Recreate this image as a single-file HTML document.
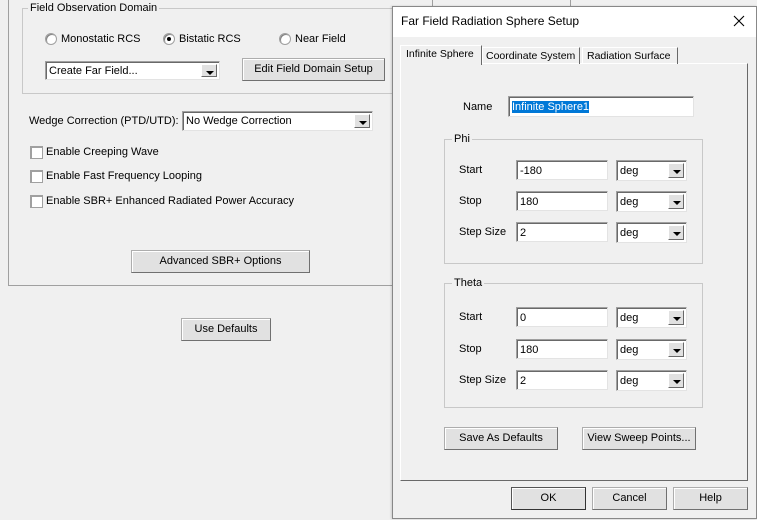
<!DOCTYPE html>
<html><head><meta charset="utf-8"><style>
*{box-sizing:border-box;margin:0;padding:0}
body{width:757px;height:520px;background:#f0f0f0;font-family:"Liberation Sans",Tahoma,sans-serif;font-size:11px;color:#000;position:relative;overflow:hidden}
.a{position:absolute}
.t{position:absolute;white-space:nowrap;line-height:13px}
.grp{position:absolute;border:1px solid #c8c8c8}
.lbl{position:absolute;background:#f0f0f0;padding:0 2px;line-height:13px;top:-7px;left:5px;white-space:nowrap}
.btn{position:absolute;background:#e1e1e1;border:1px solid #adadad;border-right-color:#707070;border-bottom-color:#707070;box-shadow:inset 1px 1px 0 #fff;text-align:center;white-space:nowrap}
.tb{position:absolute;background:#fff;border:1px solid #a0a0a0;border-right-color:#e3e3e3;border-bottom-color:#e3e3e3;box-shadow:inset 1px 1px 0 #696969;padding:3px 0 0 3px;line-height:14px;white-space:nowrap}
.cb{position:absolute;background:#fff;border:1px solid #a0a0a0;border-right-color:#e3e3e3;border-bottom-color:#e3e3e3;box-shadow:inset 1px 1px 0 #696969;padding:4px 0 0 3px;line-height:13px;white-space:nowrap}
.cb .ar{position:absolute;right:2px;top:2px;bottom:2px;width:16px;background:#e1e1e1;border:1px solid #fff;border-right-color:#696969;border-bottom-color:#696969}
.cb .ar:after{content:"";position:absolute;left:4px;top:6px;border-left:4px solid transparent;border-right:4px solid transparent;border-top:4px solid #000}
.rad{position:absolute;width:12px;height:12px;border-radius:50%;background:#fff;border:1px solid #a0a0a0;box-shadow:inset 1px 1px 0 #808080}
.chk{position:absolute;width:13px;height:13px;background:#fff;border:1px solid #a0a0a0;box-shadow:inset 1px 1px 0 #a0a0a0}
</style></head><body>
<div class="a" style="left:8px;top:0;width:1px;height:286px;background:#a0a0a0"></div>
<div class="a" style="left:8px;top:285px;width:384px;height:1px;background:#a0a0a0"></div>
<div class="grp" style="left:22px;top:8px;width:380px;height:86px"><span class="lbl">Field Observation Domain</span></div>
<div class="rad" style="left:45px;top:33px"></div><div class="t" style="left:61px;top:33px">Monostatic RCS</div>
<div class="rad" style="left:163px;top:33px"><div class="a" style="left:3px;top:3px;width:4px;height:4px;border-radius:50%;background:#000"></div></div><div class="t" style="left:179px;top:33px">Bistatic RCS</div>
<div class="rad" style="left:279px;top:33px"></div><div class="t" style="left:295px;top:33px">Near Field</div>
<div class="cb" style="left:45px;top:61px;width:175px;height:19px;padding-top:3px">Create Far Field...<span class="ar"></span></div>
<div class="btn" style="left:242px;top:58px;width:143px;height:23px;line-height:21px">Edit Field Domain Setup</div>
<div class="t" style="left:29px;top:115px">Wedge Correction (PTD/UTD):</div>
<div class="cb" style="left:182px;top:111px;width:191px;height:20px;padding-top:3px">No Wedge Correction<span class="ar"></span></div>
<div class="chk" style="left:30px;top:146px"></div><div class="t" style="left:46px;top:146px">Enable Creeping Wave</div>
<div class="chk" style="left:30px;top:170px"></div><div class="t" style="left:46px;top:170px">Enable Fast Frequency Looping</div>
<div class="chk" style="left:30px;top:195px"></div><div class="t" style="left:46px;top:195px">Enable SBR+ Enhanced Radiated Power Accuracy</div>
<div class="btn" style="left:131px;top:250px;width:179px;height:23px;line-height:21px">Advanced SBR+ Options</div>
<div class="btn" style="left:181px;top:318px;width:90px;height:23px;line-height:21px">Use Defaults</div>
<div class="a" style="left:432px;top:0;width:1px;height:6px;background:#a0a0a0"></div>
<div class="a" style="left:570px;top:0;width:1px;height:6px;background:#a0a0a0"></div>
<div class="a" style="left:392px;top:6px;width:365px;height:513px;background:#f0f0f0;border:1px solid #888;box-shadow:-1px 0 2px rgba(0,0,0,.15)"></div>
<div class="a" style="left:393px;top:7px;width:363px;height:30px;background:#fff"></div>
<div class="t" style="left:401px;top:15px;font-size:12px">Far Field Radiation Sphere Setup</div>
<svg class="a" style="left:733px;top:15px" width="12" height="12"><path d="M1 1L11 11M11 1L1 11" stroke="#000" stroke-width="1.1"/></svg>
<div class="a" style="left:400px;top:63px;width:348px;height:418px;border:1px solid #fff;border-right-color:#696969;border-bottom-color:#696969"></div>
<div class="a" style="left:400px;top:45px;width:82px;height:20px;background:#f0f0f0;border:1px solid #fff;border-bottom:none;border-right-color:#696969"></div>
<div class="t" style="left:406px;top:48px;font-size:10.5px">Infinite Sphere</div>
<div class="a" style="left:482px;top:47px;width:98px;height:17px;border:1px solid #fff;border-bottom:none;border-right-color:#696969"></div>
<div class="t" style="left:486px;top:50px;font-size:10.5px">Coordinate System</div>
<div class="a" style="left:582px;top:47px;width:96px;height:17px;border:1px solid #fff;border-bottom:none;border-right-color:#696969"></div>
<div class="t" style="left:587px;top:50px;font-size:10.5px">Radiation Surface</div>
<div class="t" style="left:463px;top:101px">Name</div>
<div class="tb" style="left:508px;top:96px;width:186px;height:21px"><span style="background:#0078d7;color:#fff">Infinite Sphere1</span></div>
<div class="grp" style="left:444px;top:139px;width:259px;height:125px"><span class="lbl" style="left:7px">Phi</span></div>
<div class="grp" style="left:444px;top:283px;width:259px;height:125px"><span class="lbl" style="left:7px">Theta</span></div>
<div class="t" style="left:459px;top:164px">Start</div><div class="tb" style="left:516px;top:160px;width:92px;height:20px">-180</div><div class="cb" style="left:616px;top:160px;width:71px;height:21px">deg<span class="ar"></span></div>
<div class="t" style="left:459px;top:195px">Stop</div><div class="tb" style="left:516px;top:191px;width:92px;height:20px">180</div><div class="cb" style="left:616px;top:191px;width:71px;height:21px">deg<span class="ar"></span></div>
<div class="t" style="left:459px;top:226px">Step Size</div><div class="tb" style="left:516px;top:222px;width:92px;height:20px">2</div><div class="cb" style="left:616px;top:222px;width:71px;height:21px">deg<span class="ar"></span></div>
<div class="t" style="left:459px;top:311px">Start</div><div class="tb" style="left:516px;top:307px;width:92px;height:20px">0</div><div class="cb" style="left:616px;top:307px;width:71px;height:21px">deg<span class="ar"></span></div>
<div class="t" style="left:459px;top:343px">Stop</div><div class="tb" style="left:516px;top:339px;width:92px;height:20px">180</div><div class="cb" style="left:616px;top:339px;width:71px;height:21px">deg<span class="ar"></span></div>
<div class="t" style="left:459px;top:374px">Step Size</div><div class="tb" style="left:516px;top:370px;width:92px;height:20px">2</div><div class="cb" style="left:616px;top:370px;width:71px;height:21px">deg<span class="ar"></span></div>
<div class="btn" style="left:444px;top:427px;width:114px;height:23px;line-height:21px">Save As Defaults</div>
<div class="btn" style="left:582px;top:427px;width:114px;height:23px;line-height:21px">View Sweep Points...</div>
<div class="btn" style="left:511px;top:487px;width:75px;height:23px;line-height:21px;border:1px solid #555;border-right-color:#333;border-bottom-color:#333">OK</div>
<div class="btn" style="left:592px;top:487px;width:75px;height:23px;line-height:21px">Cancel</div>
<div class="btn" style="left:673px;top:487px;width:75px;height:23px;line-height:21px">Help</div>
</body></html>
